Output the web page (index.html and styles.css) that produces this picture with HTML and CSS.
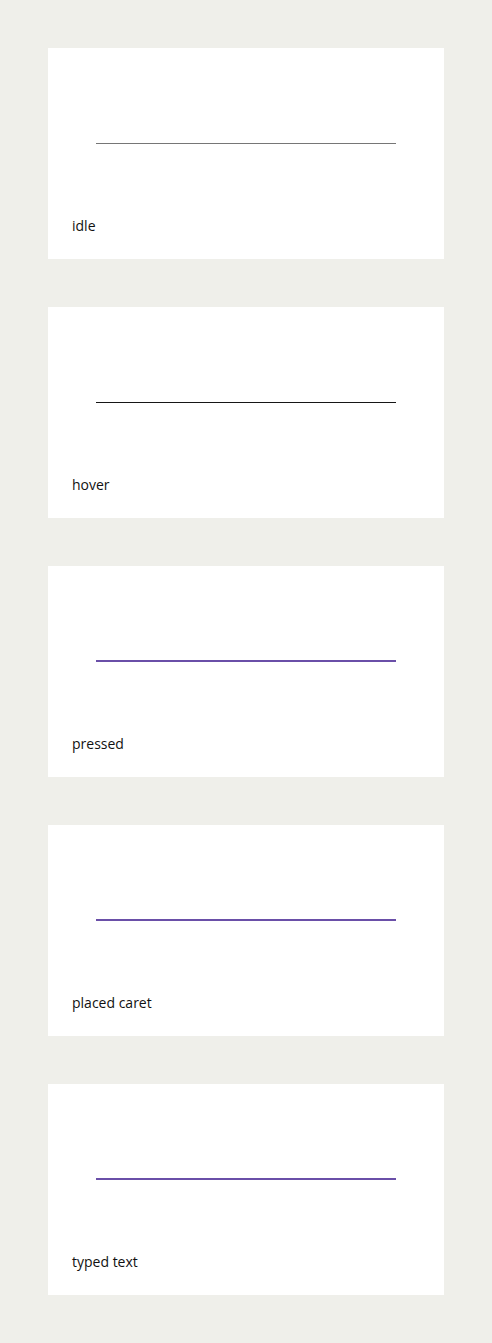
FILE: index.html
```html
<!DOCTYPE html>
<html lang="en">
<head>
<meta charset="utf-8">
<title>Field states</title>
<link rel="stylesheet" href="styles.css">
</head>
<body>
<main class="stack">
  <section class="card">
    <div class="field-wrap"><div class="field field--idle"></div></div>
    <p class="label">idle</p>
  </section>
  <section class="card">
    <div class="field-wrap"><div class="field field--hover"></div></div>
    <p class="label">hover</p>
  </section>
  <section class="card">
    <div class="field-wrap"><div class="field field--active"></div></div>
    <p class="label">pressed</p>
  </section>
  <section class="card">
    <div class="field-wrap"><div class="field field--active"></div></div>
    <p class="label">placed caret</p>
  </section>
  <section class="card">
    <div class="field-wrap"><div class="field field--active"></div></div>
    <p class="label">typed text</p>
  </section>
</main>
</body>
</html>
```
FILE: styles.css
```css
html, body {
  margin: 0;
  padding: 0;
}
body {
  background: #efefea;
  font-family: "Open Sans", "Noto Sans", sans-serif;
  color: #111;
}
.stack {
  display: flex;
  flex-direction: column;
  gap: 48px;
  padding: 48px;
}
.card {
  background: #fff;
  height: 211px;
  box-sizing: border-box;
  padding: 24px 24px 23px;
  display: flex;
  flex-direction: column;
}
.field-wrap {
  display: flex;
  justify-content: center;
  padding-top: 32px;
}
.field {
  width: 300px;
  height: 40px;
  box-sizing: border-box;
}
.field--idle { border-bottom: 1px solid #767676; }
.field--hover { border-bottom: 1px solid #161616; }
.field--active { border-bottom: 2px solid #6a4fa8; }
.label {
  margin: auto 0 0;
  font-size: 14px;
  line-height: 20px;
}
```
